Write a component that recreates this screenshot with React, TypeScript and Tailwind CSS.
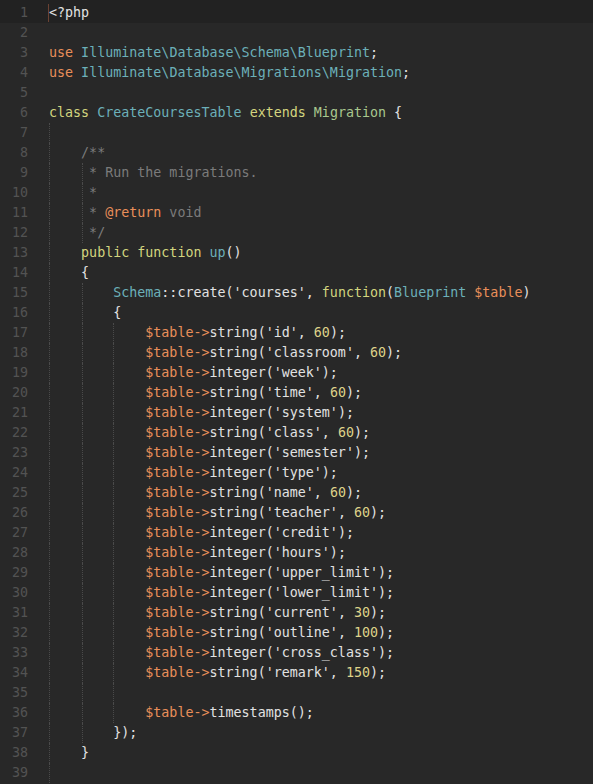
import React from 'react';

type Tok = [string, keyof typeof tone];

const tone = {
  w: 'text-[#e2e2e2]',
  o: 'text-[#e98f5a]',
  t: 'text-[#6cb0b9]',
  y: 'text-[#d3d57f]',
  g: 'text-[#a8c78e]',
  n: 'text-[#dfd38a]',
  c: 'text-[#7b7b7b]',
};

const guidePos: Record<number, string> = {
  0: 'left-[49px]',
  4: 'left-[82px]',
  8: 'left-[113px]',
};

const col = (name: string, arg: string, num?: string): Tok[] => {
  const out: Tok[] = [
    ['            $table->', 'o'],
    [`${name}('${arg}'`, 'w'],
  ];
  if (num) out.push([', ', 'w'], [num, 'n']);
  out.push([');', 'w']);
  return out;
};

const columns: Tok[][] = [
  col('string', 'id', '60'),
  col('string', 'classroom', '60'),
  col('integer', 'week'),
  col('string', 'time', '60'),
  col('integer', 'system'),
  col('string', 'class', '60'),
  col('integer', 'semester'),
  col('integer', 'type'),
  col('string', 'name', '60'),
  col('string', 'teacher', '60'),
  col('integer', 'credit'),
  col('integer', 'hours'),
  col('integer', 'upper_limit'),
  col('integer', 'lower_limit'),
  col('string', 'current', '30'),
  col('string', 'outline', '100'),
  col('integer', 'cross_class'),
  col('string', 'remark', '150'),
];

const lines: { toks: Tok[]; guides: number[] }[] = [
  { toks: [['<?php', 'w']], guides: [] },
  { toks: [], guides: [] },
  { toks: [['use ', 'o'], ['Illuminate\\Database\\Schema\\Blueprint', 't'], [';', 'w']], guides: [] },
  { toks: [['use ', 'o'], ['Illuminate\\Database\\Migrations\\Migration', 't'], [';', 'w']], guides: [] },
  { toks: [], guides: [] },
  {
    toks: [['class ', 'y'], ['CreateCoursesTable ', 't'], ['extends ', 'y'], ['Migration ', 'g'], ['{', 'w']],
    guides: [],
  },
  { toks: [], guides: [0] },
  { toks: [['    /**', 'c']], guides: [0] },
  { toks: [['     * Run the migrations.', 'c']], guides: [0, 4] },
  { toks: [['     *', 'c']], guides: [0, 4] },
  { toks: [['     * ', 'c'], ['@return', 'o'], [' void', 'c']], guides: [0, 4] },
  { toks: [['     */', 'c']], guides: [0, 4] },
  { toks: [['    public function ', 'y'], ['up', 't'], ['()', 'w']], guides: [0] },
  { toks: [['    {', 'w']], guides: [0] },
  {
    toks: [
      ['        Schema', 't'],
      ["::create('courses', ", 'w'],
      ['function', 'y'],
      ['(', 'w'],
      ['Blueprint ', 't'],
      ['$table', 'o'],
      [')', 'w'],
    ],
    guides: [0, 4],
  },
  { toks: [['        {', 'w']], guides: [0, 4] },
  ...columns.map((toks) => ({ toks, guides: [0, 4, 8] })),
  { toks: [], guides: [0, 4, 8] },
  { toks: [['            $table->', 'o'], ['timestamps();', 'w']], guides: [0, 4, 8] },
  { toks: [['        });', 'w']], guides: [0, 4] },
  { toks: [['    }', 'w']], guides: [0] },
  { toks: [], guides: [0] },
];

export default function App() {
  return (
    <div
      className="h-[784px] w-full overflow-hidden bg-[#282828] text-[13.33px] leading-5"
      style={{ fontFamily: '"DejaVu Sans Mono", "Liberation Mono", monospace' }}
    >
      {lines.map((line, i) => (
        <div
          key={i}
          className={`relative flex ${i === 0 ? 'h-[23px] bg-[#222222] pt-[3px]' : 'h-5'}`}
        >
          {line.guides.map((g) => (
            <span
              key={g}
              className={`absolute top-0 bottom-0 border-l border-dotted border-[#4a4a4a] ${guidePos[g]}`}
            />
          ))}
          <span className="w-[28px] shrink-0 text-right text-[#535353]">{i + 1}</span>
          <span className="ml-[20px] flex items-center">
            {i === 0 ? (
              <span className="h-[18px] w-px bg-[#6b4233]" />
            ) : (
              <span className="w-px" />
            )}
          </span>
          <span className="whitespace-pre">
            {line.toks.map(([text, c], j) => (
              <span key={j} className={tone[c]}>
                {text}
              </span>
            ))}
          </span>
        </div>
      ))}
    </div>
  );
}
